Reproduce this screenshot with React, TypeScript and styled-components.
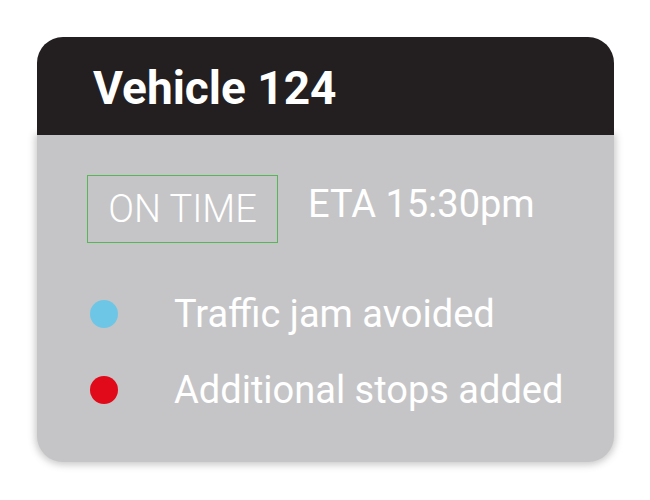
import React from "react";
import styled, { createGlobalStyle } from "styled-components";

const GlobalStyle = createGlobalStyle`
  html, body {
    margin: 0;
    padding: 0;
    background: #ffffff;
  }
  body {
    font-family: Roboto, "Liberation Sans", sans-serif;
  }
`;

const Page = styled.div`
  width: 650px;
  height: 500px;
  padding: 37px 0 0 37px;
  box-sizing: border-box;
`;

const Card = styled.div`
  width: 577px;
  display: flex;
  flex-direction: column;
`;

const Header = styled.div`
  position: relative;
  z-index: 1;
  height: 98px;
  background: #231f20;
  border-radius: 26px 26px 0 0;
  display: flex;
  align-items: center;
  padding-left: 56px;
  padding-top: 3px;
  box-sizing: border-box;
`;

const Title = styled.h1`
  margin: 0;
  color: #ffffff;
  font-family: Roboto, sans-serif;
  font-weight: 700;
  font-size: 46px;
  line-height: 1;
`;

const Body = styled.div`
  background: #c5c5c7;
  border-radius: 0 0 26px 26px;
  box-shadow: 0 1px 7px 2px rgba(197, 197, 199, 0.9);
  padding: 40px 0 48px 50px;
  display: flex;
  flex-direction: column;
`;

const StatusRow = styled.div`
  display: flex;
  align-items: center;
  gap: 30px;
  margin-bottom: 47px;
`;

const Badge = styled.div`
  width: 191px;
  height: 68px;
  box-sizing: border-box;
  border: 1px solid #58b558;
  display: flex;
  align-items: center;
  justify-content: center;
  color: #ffffff;
  font-weight: 300;
  font-size: 38px;
  line-height: 1;
`;

const Eta = styled.div`
  color: #ffffff;
  font-weight: 400;
  font-size: 38px;
  line-height: 1;
  margin-top: -10px;
`;

const EventList = styled.div`
  display: flex;
  flex-direction: column;
  gap: 28px;
`;

const EventRow = styled.div`
  display: flex;
  align-items: center;
  height: 48px;
`;

const Dot = styled.span<{ $color: string }>`
  width: 28px;
  height: 28px;
  border-radius: 50%;
  background: ${(p) => p.$color};
  margin-left: 3px;
  margin-right: 56px;
  flex: none;
`;

const EventText = styled.span`
  color: #ffffff;
  font-weight: 400;
  font-size: 38px;
  line-height: 1;
`;

const events = [
  { color: "#6ec6e6", text: "Traffic jam avoided" },
  { color: "#e10a1b", text: "Additional stops added" },
];

export default function App() {
  return (
    <>
      <GlobalStyle />
      <Page>
        <Card>
          <Header>
            <Title>Vehicle 124</Title>
          </Header>
          <Body>
            <StatusRow>
              <Badge>ON TIME</Badge>
              <Eta>ETA 15:30pm</Eta>
            </StatusRow>
            <EventList>
              {events.map((e) => (
                <EventRow key={e.text}>
                  <Dot $color={e.color} />
                  <EventText>{e.text}</EventText>
                </EventRow>
              ))}
            </EventList>
          </Body>
        </Card>
      </Page>
    </>
  );
}
